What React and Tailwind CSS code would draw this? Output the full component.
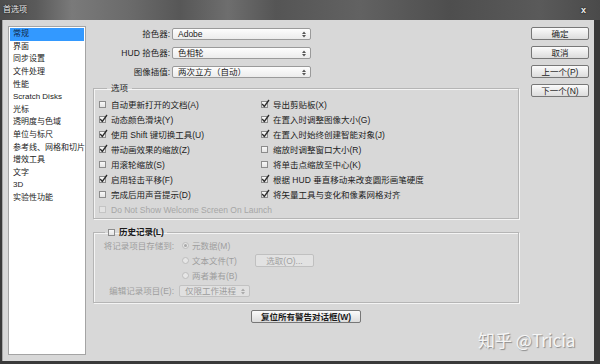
import React from "react";

const LIST = [
  "常规",
  "界面",
  "同步设置",
  "文件处理",
  "性能",
  "Scratch Disks",
  "光标",
  "透明度与色域",
  "单位与标尺",
  "参考线、网格和切片",
  "增效工具",
  "文字",
  "3D",
  "实验性功能",
];

const LEFT = [
  ["自动更新打开的文档(A)", false],
  ["动态颜色滑块(Y)", true],
  ["使用 Shift 键切换工具(U)", true],
  ["带动画效果的缩放(Z)", true],
  ["用滚轮缩放(S)", false],
  ["启用轻击平移(F)", true],
  ["完成后用声音提示(D)", false],
];

const RIGHT = [
  ["导出剪贴板(X)", true],
  ["在置入时调整图像大小(G)", true],
  ["在置入时始终创建智能对象(J)", true],
  ["缩放时调整窗口大小(R)", false],
  ["将单击点缩放至中心(K)", false],
  ["根据 HUD 垂直移动来改变圆形画笔硬度", true],
  ["将矢量工具与变化和像素网格对齐", true],
];

const Box = ({ checked, disabled }) => (
  <span className="relative inline-block shrink-0 w-[7px] h-[7px]">
    <span
      className={
        "block w-[7px] h-[7px] border " +
        (disabled
          ? "border-[#c4c4c4] bg-[#e2e2e2]"
          : "border-[#8c8c8c] bg-[linear-gradient(#f8f8f8,#e4e4e4)]")
      }
    />
    {checked && (
      <svg
        className="absolute left-[0px] top-[-2px]"
        width="9"
        height="9"
        viewBox="0 0 9 9"
      >
        <path d="M1.2 5 L3.3 7.4 L8 1" fill="none" stroke="#2a2a2a" strokeWidth="1.3" />
      </svg>
    )}
  </span>
);

const Radio = ({ on }) => (
  <span className="flex items-center justify-center shrink-0 w-[7px] h-[7px] rounded-full border border-[#bdbdbd] bg-[#e6e6e6]">
    {on && <span className="w-[3px] h-[3px] rounded-full bg-[#a8a8a8]" />}
  </span>
);

const Arrows = ({ color = "#444" }) => (
  <svg width="4" height="7" viewBox="0 0 4 7">
    <path d="M0 3 L2 0.5 L4 3 Z M0 4 L2 6.5 L4 4 Z" fill={color} />
  </svg>
);

const Select = ({ value, className = "", disabled }) => (
  <div
    className={
      "flex items-center justify-between h-[12px] pl-[5px] pr-[4px] rounded-[2px] border " +
      (disabled
        ? "border-[#c2c2c2] bg-[#e0e0e0] text-[#9c9c9c] "
        : "border-[#9a9a9a] bg-[linear-gradient(#fdfdfd,#ececec)] ") +
      className
    }
  >
    <span>{value}</span>
    <Arrows color={disabled ? "#aaa" : "#555"} />
  </div>
);

const Button = ({ children, className = "", disabled }) => (
  <div
    className={
      "flex items-center justify-center h-[13px] rounded-[2px] border " +
      (disabled
        ? "border-[#c0c0c0] bg-[#e2e2e2] text-[#a0a0a0] "
        : "border-[#777] bg-[linear-gradient(#fbfbfb,#dcdcdc)] text-[#1c1c1c] ") +
      className
    }
  >
    {children}
  </div>
);

const Check = ({ label, checked, disabled, className = "" }) => (
  <div className={"flex items-center h-[15px] gap-[5px] whitespace-nowrap " + className}>
    <Box checked={checked} disabled={disabled} />
    <span className={disabled ? "text-[#a6a6a6]" : ""}>{label}</span>
  </div>
);

export default function App() {
  return (
    <div className="relative flex flex-col w-[600px] h-[364px] overflow-hidden bg-[#3a3a3a] text-[8.5px] leading-[10px] text-[#222] font-['Liberation_Sans','Noto_Sans_CJK_SC',sans-serif]">
      {/* title bar */}
      <div className="flex items-center justify-between h-[20px] pl-[3px] pr-[14px] bg-[linear-gradient(90deg,#4c4c4c_0%,#5a5a5a_6%,#7a7a7a_12%,#6a6a6a_22%,#575757_30%,#6e6e6e_38%,#555_46%,#626262_60%,#4e4e4e_75%,#5a5a5a_90%,#4a4a4a_100%)]">
        <span className="text-[8px] text-[#ededed] [text-shadow:0_0_2px_#000]">首选项</span>
        <span className="text-[9px] font-bold text-[#f2f2f2] [text-shadow:0_0_2px_#000]">x</span>
      </div>

      {/* body */}
      <div className="flex flex-1 ml-[2px] mr-[6px] mb-[3px] pl-[5px] pr-[6px] pt-[6px] pb-[6px] gap-[7px] bg-[#d8d8d8] border-l border-[#a8a8a8]">
        {/* category list */}
        <div className="w-[78px] shrink-0 bg-white border border-[#a4a4a4] pt-[1px] px-[1px]">
          {LIST.map((item, i) => (
            <div
              key={item}
              className={
                "h-[12.6px] pl-[3px] flex items-center whitespace-nowrap text-[8px] " +
                (i === 0 ? "bg-[#3399ff] text-[#10284a]" : "")
              }
            >
              {item}
            </div>
          ))}
        </div>

        {/* main column */}
        <div className="w-[426px] shrink-0 flex flex-col">
          <div className="flex flex-col gap-[7px] mt-[2px]">
            {[
              ["拾色器:", "Adobe"],
              ["HUD 拾色器:", "色相轮"],
              ["图像插值:", "两次立方（自动）"],
            ].map(([label, value]) => (
              <div key={label} className="flex items-center">
                <span className="w-[79px] text-right pr-[2px]">{label}</span>
                <Select value={value} className="w-[139px]" />
              </div>
            ))}
          </div>

          <fieldset className="mt-[5px] border border-[#b5b5b5] shadow-[inset_1px_1px_0_#f4f4f4,1px_1px_0_#f4f4f4] px-[5px] pt-[4px] pb-[1px]">
            <legend className="ml-[8px] px-[4px] leading-[10px]">选项</legend>
            <div className="grid grid-cols-[162px_1fr]">
              {LEFT.map(([l, c], i) => (
                <React.Fragment key={l}>
                  <Check label={l} checked={c} />
                  <Check label={RIGHT[i][0]} checked={RIGHT[i][1]} />
                </React.Fragment>
              ))}
              <Check label="Do Not Show Welcome Screen On Launch" disabled className="col-span-2" />
            </div>
          </fieldset>

          <fieldset className="mt-[8px] border border-[#b5b5b5] shadow-[inset_1px_1px_0_#f4f4f4,1px_1px_0_#f4f4f4] pt-[1px] pb-[3px] text-[#9e9e9e]">
            <legend className="ml-[11px] px-[3px] leading-[10px] flex items-center gap-[4px] text-[#1a1a1a] font-bold">
              <Box />
              <span>历史记录(L)</span>
            </legend>
            <div className="flex flex-col">
              <div className="flex items-center h-[15px]">
                <span className="w-[80px] text-right">将记录项目存储到:</span>
                <span className="ml-[8px] flex items-center gap-[3px]">
                  <Radio on />
                  <span>元数据(M)</span>
                </span>
              </div>
              <div className="flex items-center h-[15px]">
                <span className="w-[80px]" />
                <span className="ml-[8px] w-[73px] flex items-center gap-[3px]">
                  <Radio />
                  <span>文本文件(T)</span>
                </span>
                <Button disabled className="w-[59px]">
                  选取(O)...
                </Button>
              </div>
              <div className="flex items-center h-[15px]">
                <span className="w-[80px]" />
                <span className="ml-[8px] flex items-center gap-[3px]">
                  <Radio />
                  <span>两者兼有(B)</span>
                </span>
              </div>
              <div className="flex items-center h-[16px]">
                <span className="w-[80px] text-right">编辑记录项目(E):</span>
                <Select disabled value="仅限工作进程" className="ml-[5px] w-[71px]" />
              </div>
            </div>
          </fieldset>

          <Button className="mt-[7px] mx-auto w-[110px] h-[12px] font-bold">复位所有警告对话框(W)</Button>
        </div>

        {/* buttons */}
        <div className="ml-[5px] w-[58px] shrink-0 flex flex-col gap-[6px] pt-[1px]">
          <Button className="border-[#5a5a5a]">确定</Button>
          <Button>取消</Button>
          <Button>上一个(P)</Button>
          <Button>下一个(N)</Button>
        </div>
      </div>

      {/* watermark */}
      <div className="absolute left-[478px] top-[330px] text-[17px] leading-[20px] text-[#f6f6f6] font-['Noto_Sans_CJK_SC',sans-serif] [text-shadow:1px_1px_1px_#8a8a8a]">
        知乎 @Tricia
      </div>
    </div>
  );
}
